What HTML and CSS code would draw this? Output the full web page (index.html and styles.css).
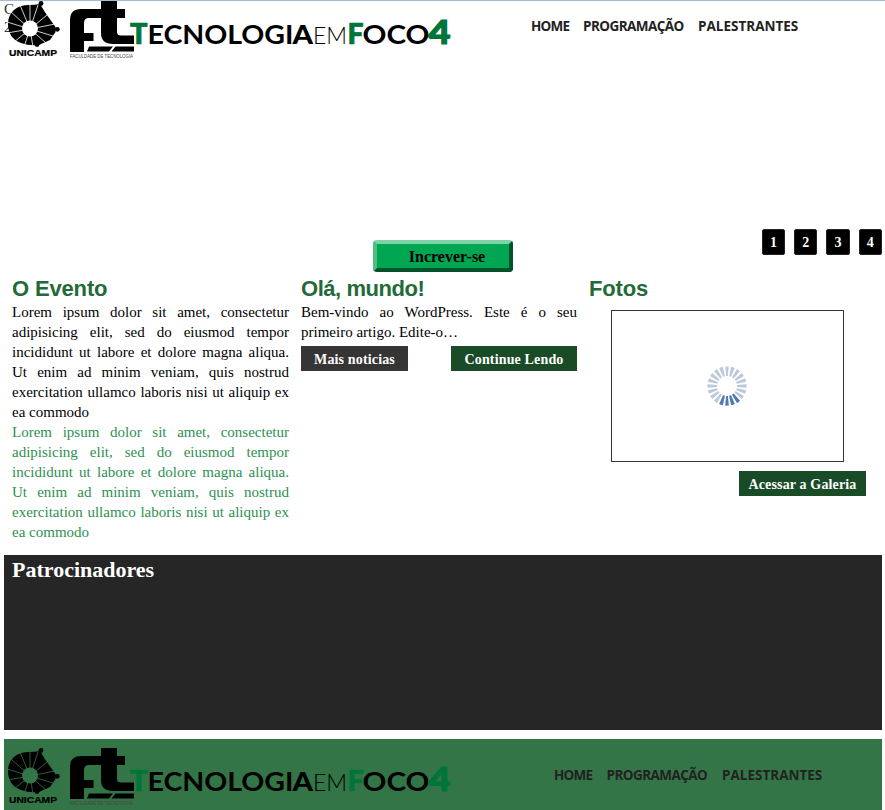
FILE: index.html
```html
<!DOCTYPE html>
<html lang="pt-BR">
<head>
<meta charset="utf-8">
<title>Tecnologia em Foco 4</title>
<link rel="stylesheet" href="styles.css">
</head>
<body>
<header class="header">
  <div class="date">C<br>2</div>
  <svg class="logo" viewBox="4 0 450 62" width="450" height="62">
    <g class="unicamp">
      <path d="M40 4 L45.500 13 L55.500 27 V32 L50 40 L39 45 Q29 46 21 43 C13 40 8 34 8 24 C8 12 17 5 29 5 Q35 5 40 4Z"/>
      <circle cx="41" cy="3.5" r="2.4"/><circle cx="57.300" cy="29.3" r="2.4"/><circle cx="37" cy="44.5" r="2.4"/>
      <path class="gap" d="M30 29V4M30 29L20 5M30 29L11 12M30 29L7 22M30 29L7 33M30 29L14 42M30 29L24 47M30 29L33 47M30 29L46 43M30 29L53 36M30 29L55 24M30 29L47 15M30 29L38 5"/>
      <circle class="hole" cx="30" cy="28.500" r="8"/>
      <text x="9" y="56" class="uni" textLength="48" lengthAdjust="spacingAndGlyphs">UNICAMP</text>
    </g>
    <path d="M70 52V20Q70 9 81 9H101V1H117V9H125V18H117V32Q117 35.5 121 35.5H134V44H113Q101 44 101 33V18H89Q84 18 84 23V33H93.5V41H84V47H70ZM70 46H84V52H70ZM89 46.500H113L109 51.5H87ZM115.500 46.500H134V51.500H111.500Z"/>
    <text x="70" y="58" class="faculty" textLength="63" lengthAdjust="spacingAndGlyphs">FACULDADE DE TECNOLOGIA</text>
    <text x="130" y="43.700" class="cap" textLength="17.500" lengthAdjust="spacingAndGlyphs">T</text>
    <text x="147.500" y="43.700" class="word" textLength="146" lengthAdjust="spacingAndGlyphs">ECNOLOGI</text>
    <text x="292.500" y="43.700" class="word heavy" textLength="20.500" lengthAdjust="spacingAndGlyphs">A</text>
    <text x="313" y="43.700" class="thin" textLength="34" lengthAdjust="spacingAndGlyphs">EM</text>
    <text x="347.500" y="43.700" class="cap effe" textLength="16" lengthAdjust="spacingAndGlyphs">F</text>
    <text x="362.500" y="43.700" class="word" textLength="67" lengthAdjust="spacingAndGlyphs">OCO</text>
    <text x="428.500" y="43.700" class="cap four" textLength="22" lengthAdjust="spacingAndGlyphs">4</text>
  </svg>
  <nav class="nav"><a class="home">HOME</a><a class="program">PROGRAMAÇÃO</a><a class="speakers">PALESTRANTES</a></nav>
</header>

<section class="actions">
  <button class="signup">Increver-se</button>
  <div class="pager"><a>1</a><a>2</a><a>3</a><a>4</a></div>
</section>

<main class="columns">
  <section>
    <h2>O Evento</h2>
    <p>Lorem ipsum dolor sit amet, consectetur adipisicing elit, sed do eiusmod tempor incididunt ut labore et dolore magna aliqua. Ut enim ad minim veniam, quis nostrud exercitation ullamco laboris nisi ut aliquip ex ea commodo</p>
    <p class="green">Lorem ipsum dolor sit amet, consectetur adipisicing elit, sed do eiusmod tempor incididunt ut labore et dolore magna aliqua. Ut enim ad minim veniam, quis nostrud exercitation ullamco laboris nisi ut aliquip ex ea commodo</p>
  </section>
  <section>
    <h2 class="post">Olá, mundo!</h2>
    <p>Bem-vindo ao WordPress. Este é o seu primeiro artigo. Edite-o…</p>
    <div class="links"><a class="btn dark">Mais noticias</a><a class="btn read">Continue Lendo</a></div>
  </section>
  <section>
    <h2>Fotos</h2>
    <div class="photo">
      <svg class="spinner" viewBox="-20 -20 40 40" width="40" height="40">
        <circle class="spokes" r="14.800" pathLength="220"/>
        <circle class="spokes active" r="14.800" pathLength="220"/>
      </svg>
    </div>
    <a class="btn gallery">Acessar a Galeria</a>
  </section>
</main>

<section class="sponsors"><h2>Patrocinadores</h2></section>

<footer class="footer">
  <svg class="logo" viewBox="4 0 450 62" width="450" height="62">
    <g class="unicamp">
      <path d="M40 4 L45.500 13 L55.500 27 V32 L50 40 L39 45 Q29 46 21 43 C13 40 8 34 8 24 C8 12 17 5 29 5 Q35 5 40 4Z"/>
      <circle cx="41" cy="3.5" r="2.4"/><circle cx="57.300" cy="29.3" r="2.4"/><circle cx="37" cy="44.5" r="2.4"/>
      <path class="gap" d="M30 29V4M30 29L20 5M30 29L11 12M30 29L7 22M30 29L7 33M30 29L14 42M30 29L24 47M30 29L33 47M30 29L46 43M30 29L53 36M30 29L55 24M30 29L47 15M30 29L38 5"/>
      <circle class="hole" cx="30" cy="28.500" r="8"/>
      <text x="9" y="56" class="uni" textLength="48" lengthAdjust="spacingAndGlyphs">UNICAMP</text>
    </g>
    <path d="M70 52V20Q70 9 81 9H101V1H117V9H125V18H117V32Q117 35.5 121 35.5H134V44H113Q101 44 101 33V18H89Q84 18 84 23V33H93.5V41H84V47H70ZM70 46H84V52H70ZM89 46.500H113L109 51.5H87ZM115.500 46.500H134V51.500H111.500Z"/>
    <text x="70" y="58" class="faculty" textLength="63" lengthAdjust="spacingAndGlyphs">FACULDADE DE TECNOLOGIA</text>
    <text x="130" y="43.700" class="cap" textLength="17.500" lengthAdjust="spacingAndGlyphs">T</text>
    <text x="147.500" y="43.700" class="word" textLength="146" lengthAdjust="spacingAndGlyphs">ECNOLOGI</text>
    <text x="292.500" y="43.700" class="word heavy" textLength="20.500" lengthAdjust="spacingAndGlyphs">A</text>
    <text x="313" y="43.700" class="thin" textLength="34" lengthAdjust="spacingAndGlyphs">EM</text>
    <text x="347.500" y="43.700" class="cap effe" textLength="16" lengthAdjust="spacingAndGlyphs">F</text>
    <text x="362.500" y="43.700" class="word" textLength="67" lengthAdjust="spacingAndGlyphs">OCO</text>
    <text x="428.500" y="43.700" class="cap four" textLength="22" lengthAdjust="spacingAndGlyphs">4</text>
  </svg>
  <nav class="nav"><a class="home">HOME</a><a class="program">PROGRAMAÇÃO</a><a class="speakers">PALESTRANTES</a></nav>
</footer>
</body>
</html>
```
FILE: styles.css
```css
* { box-sizing: border-box; }
html { --bg: #fff; overflow: hidden; }
body {
  margin: 0;
  height: 810px;
  overflow: hidden;
  padding: 0 3px 0 4px;
  background: #fff linear-gradient(#a6bad2, #a6bad2) 0 0 / 100% 1px no-repeat;
  color: #000;
  font: 15px/20px "Liberation Serif", serif;
}
h2, p { margin: 0; }

.header { position: relative; display: flex; height: 229px; }
.date { position: absolute; left: 0; top: 0; line-height: 18px; color: #333; }
.logo { position: relative; display: block; flex: none; }
.nav {
  display: flex;
  gap: 14px;
  margin: 16px 0 0 77px;
  font: bold 13.5px/20px "Open Sans", sans-serif;
  color: #222;
}
.nav a { white-space: nowrap; }
.home { width: 38px; letter-spacing: -.8px; }
.program { width: 101px; letter-spacing: -.55px; }
.speakers { width: 101px; letter-spacing: 0; }

.gap { stroke: var(--bg); stroke-width: .8; fill: none; }
.hole { fill: var(--bg); }
.uni { font: bold 8.5px "Liberation Sans", sans-serif; stroke: #000; stroke-width: .2px; }
.faculty { font: 5px "Liberation Sans", sans-serif; fill: #444; }
.cap { font: 900 28.5px Lato, sans-serif; fill: #00753a; stroke: #00753a; stroke-width: .7px; }
.effe { font-size: 27.5px; }
.four { font-size: 32.5px; stroke-width: 1.2px; }
.word { font: bold 27px Lato, sans-serif; }
.heavy { font-weight: 900; }
.thin { font: 300 22.5px Lato, sans-serif; }

.actions { display: grid; grid-template-columns: 1fr 140px 1fr; height: 43px; align-items: start; }
.signup {
  grid-column: 2;
  margin: 11px 0 0;
  padding: 1px 0 0 8px;
  height: 32px;
  border: 4px solid;
  border-color: #7dd2a6 #00522a #00522a #4dbf86;
  border-radius: 4px;
  background: #00a651;
  color: #000;
  font: bold 16px/23px "Liberation Serif", serif;
}
.pager { display: flex; gap: 9px; justify-self: end; }
.pager a {
  width: 23.3px;
  height: 26px;
  border: 1px solid #222;
  border-radius: 2px;
  background: #000;
  color: #fff;
  text-align: center;
  font-weight: bold;
  font-size: 14px;
  line-height: 25px;
}

.columns {
  display: grid;
  grid-template-columns: 277px 276px 277px;
  column-gap: 12px;
  height: 283px;
  padding: 4px 8px 0;
}
.columns h2 { font: bold 22px/26px "Liberation Sans", sans-serif; color: #226b38; letter-spacing: -.15px; }
.columns .post { letter-spacing: -.45px; }
.columns p { text-align: justify; }
.columns .green { color: #2d9150; }
.links { display: flex; justify-content: space-between; margin-top: 4px; }
.btn {
  display: block;
  width: 127px;
  height: 25px;
  background: #194b27;
  color: #fff;
  text-align: center;
  font-weight: bold;
  font-size: 14px;
  line-height: 27px;
  letter-spacing: .15px;
}
.read { width: 126px; }
.dark { width: 107px; background: #363435; }
.photo {
  display: flex;
  align-items: center;
  justify-content: center;
  width: 233px;
  height: 152px;
  margin: 8px 0 9px 22px;
  padding-right: 1px;
  border: 1px solid #363435;
}
.gallery { margin-left: 150px; }
.spokes {
  fill: none;
  stroke: #bdc8da;
  stroke-width: 9.6;
  stroke-dasharray: 6.500 4.500;
  stroke-dashoffset: 3.250;
}
.active { stroke: #5379b2; stroke-dasharray: 6.500 4.500 6.500 4.500 6.500 4.500 6.500 180.500; stroke-dashoffset: -29.750; }

.sponsors { height: 175px; padding: 2px 8px; background: #262626; color: #fff; }
.sponsors h2 { font: bold 22px/26px "Liberation Serif", serif; }
.footer { --bg: #337546; display: flex; height: 71px; margin-top: 9px; padding-top: 8px; background: var(--bg); overflow: hidden; }
.footer .nav { margin: 18px 0 0 100px; gap: 14.500px; }
```
